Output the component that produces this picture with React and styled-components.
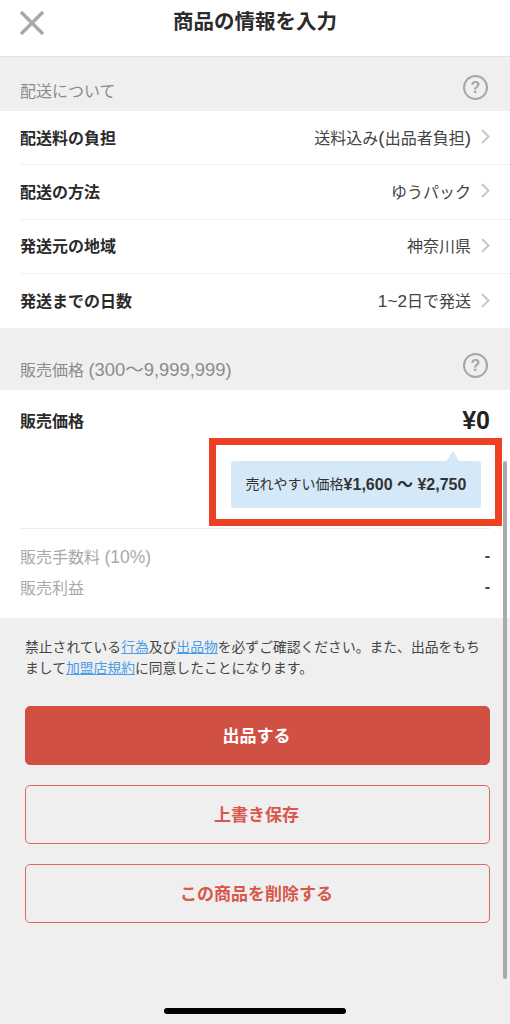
import React from 'react';
import styled, { createGlobalStyle } from 'styled-components';

const GlobalStyle = createGlobalStyle`
  html, body {
    margin: 0;
    padding: 0;
    background: #efefef;
  }
  * {
    box-sizing: border-box;
  }
`;

const Page = styled.div`
  position: relative;
  width: 510px;
  height: 1024px;
  overflow: hidden;
  background: #efefef;
  font-family: "Liberation Sans", "Noto Sans CJK JP", sans-serif;
  color: #222;
`;

const Header = styled.header`
  position: relative;
  display: flex;
  align-items: center;
  justify-content: center;
  height: 57px;
  padding-bottom: 13px;
  background: #fff;
  border-bottom: 1px solid #e2e2e2;
`;

const CloseButton = styled.span`
  position: absolute;
  left: 19px;
  top: 10px;
  display: flex;
`;

const Title = styled.h1`
  margin: 0;
  font-size: 20.5px;
  line-height: 26px;
  font-weight: 700;
  color: #2b2b2b;
`;

const SectionHead = styled.div`
  display: flex;
  align-items: flex-start;
  justify-content: space-between;
  height: ${(p) => p.$height}px;
  padding: ${(p) => p.$top}px 22px 0 20px;
`;

const SectionLabel = styled.span`
  margin-top: 6px;
  font-size: 16px;
  line-height: 22px;
  color: #8c8c8c;
`;

// latin runs are drawn a little larger than the kana around them
const Num = styled.span`
  font-size: ${(p) => p.$size}px;
`;

const HelpIcon = styled.span`
  display: flex;
  align-items: center;
  justify-content: center;
  width: 25px;
  height: 25px;
  border: 2px solid #a6a6a6;
  border-radius: 50%;
  font-size: 16px;
  font-weight: 700;
  line-height: 1;
  color: #a6a6a6;
`;

const List = styled.div`
  background: #fff;
  padding-left: 20px;
`;

const Row = styled.div`
  display: flex;
  align-items: center;
  justify-content: space-between;
  height: 54.3px;
  padding: 0 20px 2px 0;
  border-bottom: ${(p) => (p.$last ? 'none' : '1px solid #f0f0f0')};
`;

const RowLabel = styled.span`
  font-size: 16px;
  font-weight: 700;
  color: #2a2a2a;
`;

const RowValue = styled.span`
  display: flex;
  align-items: center;
  gap: 10px;
  font-size: 16px;
  color: #444;
`;

const PricePanel = styled.div`
  background: #fff;
  padding: 0 20px;
  height: 228px;
`;

const PriceTop = styled.div`
  display: flex;
  align-items: center;
  justify-content: space-between;
  height: 60px;
`;

const PriceValue = styled.span`
  font-size: 25px;
  font-weight: 700;
  color: #222;
`;

const HintRow = styled.div`
  display: flex;
  justify-content: flex-end;
  height: 78px;
  padding-top: 11px;
  padding-right: 9px;
`;

const Hint = styled.div`
  position: relative;
  display: flex;
  align-items: center;
  justify-content: center;
  width: 250px;
  height: 47px;
  padding-bottom: 3px;
  background: #d4e8f7;
  border-radius: 3px;
  font-size: 14px;
  color: #333;

  &::before {
    content: '';
    position: absolute;
    top: -10px;
    right: 21px;
    border-left: 7px solid transparent;
    border-right: 7px solid transparent;
    border-bottom: 11px solid #d4e8f7;
  }
`;

const HintPrice = styled.b`
  font-weight: 700;
  font-size: 16px;
  color: #333;
`;

const Divider = styled.div`
  height: 1px;
  background: #eee;
`;

const FeeList = styled.div`
  display: flex;
  flex-direction: column;
  gap: 9px;
  padding-top: 16px;
`;

const FeeRow = styled.div`
  display: flex;
  align-items: center;
  justify-content: space-between;
  height: 22px;
  font-size: 16px;
  color: #a9a9a9;
`;

const Dash = styled.span`
  font-weight: 700;
  color: #444;
`;

const Footer = styled.div`
  display: flex;
  flex-direction: column;
  padding: 19px 20px 0 25px;
`;

const Notice = styled.p`
  margin: 0 0 27px;
  font-size: 13.8px;
  line-height: 21px;
  color: #444;
`;

const NoticeLink = styled.a`
  color: #4a9be8;
  text-decoration: underline;
`;

const Buttons = styled.div`
  display: flex;
  flex-direction: column;
  gap: 20px;
`;

const Button = styled.button`
  height: 59px;
  border-radius: 5px;
  border: 1.5px solid ${(p) => (p.$primary ? '#d05143' : '#e0675c')};
  background: ${(p) => (p.$primary ? '#d05143' : 'transparent')};
  color: ${(p) => (p.$primary ? '#fff' : '#d9574c')};
  font-family: inherit;
  font-size: 17px;
  font-weight: 700;
  padding: 0 2px 2px 0;
`;

const HomeBar = styled.div`
  position: absolute;
  left: 164px;
  top: 1008px;
  width: 182px;
  height: 6px;
  border-radius: 3px;
  background: #000;
`;

const ScrollThumb = styled.div`
  position: absolute;
  left: 503px;
  top: 461px;
  width: 4px;
  height: 518px;
  border-radius: 2px;
  background: #a9a9a9;
`;

const Annotation = styled.div`
  position: absolute;
  left: 209px;
  top: 438px;
  width: 293px;
  height: 88px;
  border: 7px solid #ee4023;
`;

function CloseIcon() {
  return (
    <svg width="26" height="26" viewBox="0 0 26 26" fill="none">
      <path d="M2 2 L24 24 M24 2 L2 24" stroke="#a8a8a8" strokeWidth="3.4" />
    </svg>
  );
}

function Chevron() {
  return (
    <svg width="9" height="15" viewBox="0 0 9 15" fill="none">
      <path d="M1 1 L7.5 7.5 L1 14" stroke="#c8c8c8" strokeWidth="2" />
    </svg>
  );
}

const shipping = [
  ['配送料の負担', <>送料込み<Num $size={19}>(</Num>出品者負担<Num $size={19}>)</Num></>],
  ['配送の方法', 'ゆうパック'],
  ['発送元の地域', '神奈川県'],
  ['発送までの日数', <><Num $size={17.2}>1~2</Num>日で発送</>],
];

export default function App() {
  return (
    <Page>
      <GlobalStyle />
      <Header>
        <CloseButton>
          <CloseIcon />
        </CloseButton>
        <Title>商品の情報を入力</Title>
      </Header>

      <SectionHead $height={54} $top={18}>
        <SectionLabel>配送について</SectionLabel>
        <HelpIcon>?</HelpIcon>
      </SectionHead>
      <List>
        {shipping.map(([label, value], i) => (
          <Row key={label} $last={i === shipping.length - 1}>
            <RowLabel>{label}</RowLabel>
            <RowValue>
              <span>{value}</span>
              <Chevron />
            </RowValue>
          </Row>
        ))}
      </List>

      <SectionHead $height={62} $top={25}>
        <SectionLabel>
          販売価格 <Num $size={18.4}>(300〜9,999,999)</Num>
        </SectionLabel>
        <HelpIcon>?</HelpIcon>
      </SectionHead>
      <PricePanel>
        <PriceTop>
          <RowLabel>販売価格</RowLabel>
          <PriceValue>¥0</PriceValue>
        </PriceTop>
        <HintRow>
          <Hint>
            売れやすい価格<HintPrice>¥1,600 〜 ¥2,750</HintPrice>
          </Hint>
        </HintRow>
        <Divider />
        <FeeList>
          <FeeRow>
            <span>
              販売手数料 <Num $size={17.5}>(10%)</Num>
            </span>
            <Dash>-</Dash>
          </FeeRow>
          <FeeRow>
            <span>販売利益</span>
            <Dash>-</Dash>
          </FeeRow>
        </FeeList>
      </PricePanel>

      <Footer>
        <Notice>
          禁止されている<NoticeLink>行為</NoticeLink>及び<NoticeLink>出品物</NoticeLink>を必ずご確認ください。また、出品をもちまして<NoticeLink>加盟店規約</NoticeLink>に同意したことになります。
        </Notice>
        <Buttons>
          <Button $primary>出品する</Button>
          <Button>上書き保存</Button>
          <Button>この商品を削除する</Button>
        </Buttons>
      </Footer>

      <Annotation />
      <ScrollThumb />
      <HomeBar />
    </Page>
  );
}
